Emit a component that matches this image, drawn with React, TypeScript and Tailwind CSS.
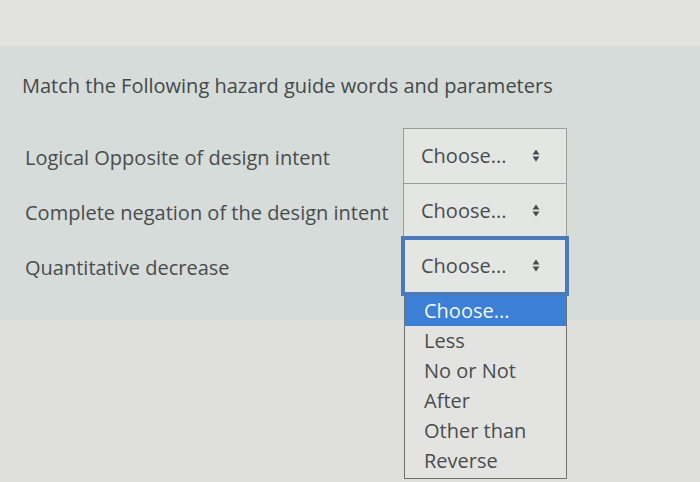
function Arrows() {
  return (
    <svg width="8" height="13" viewBox="0 0 8 13" className="shrink-0">
      <path d="M4 0.5 L7.5 5.5 H0.5 Z" fill="#4a4d4d" />
      <path d="M4 12.5 L7.5 7.5 H0.5 Z" fill="#4a4d4d" />
    </svg>
  );
}

const options = ["Choose...", "Less", "No or Not", "After", "Other than", "Reverse"];

function Select({ open }: { open?: boolean }) {
  return (
    <div className="relative">
      <div
        className={
          open
            ? "flex h-[56px] w-[164px] items-center justify-between border-2 border-[#4a79ba] bg-[#e4e6e4] pl-[16px] pr-[25px] ring-[2px] ring-[#4a79ba]"
            : "flex h-[56px] w-[164px] items-center justify-between border border-[#9a9d9c] bg-[#e4e6e4] pl-[17px] pr-[26px]"
        }
      >
        <span>Choose...</span>
        <Arrows />
      </div>
      {open && (
        <div className="absolute left-[1px] top-[58px] z-10 w-[163px] border border-[#6f7271] border-t-0 bg-[#e3e4e2] pb-[2px]">
          {options.map((o, i) => (
            <div
              key={o}
              className={
                i === 0
                  ? "flex h-[30px] items-center bg-[#3b7fd7] pl-[19px] text-[#f4f7fb]"
                  : "flex h-[30px] items-center pl-[19px]"
              }
            >
              {o}
            </div>
          ))}
        </div>
      )}
    </div>
  );
}

export default function App() {
  const rows = [
    "Logical Opposite of design intent",
    "Complete negation of the design intent",
    "Quantitative decrease",
  ];
  return (
    <div
      className="h-[482px] w-[700px] overflow-hidden bg-[#dfe0de] text-[20px] text-[#4a4c4c]"
      style={{ fontFamily: '"Open Sans", "Noto Sans", sans-serif' }}
    >
      <div className="h-[46px] bg-[#e2e3e1]" />
      <div className="h-[274px] bg-[#d5dcda] pt-[26px]">
        <h1 className="pl-[22px] text-[20px] leading-[28px] text-[#454848]">
          Match the Following hazard guide words and parameters
        </h1>
        <div className="mt-[28px] flex flex-col">
          {rows.map((r, i) => (
            <div key={r} className="flex h-[55px] items-center pl-[25px]">
              <div className="w-[378px] shrink-0 translate-y-[2px]">{r}</div>
              <Select open={i === 2} />
            </div>
          ))}
        </div>
      </div>
    </div>
  );
}
